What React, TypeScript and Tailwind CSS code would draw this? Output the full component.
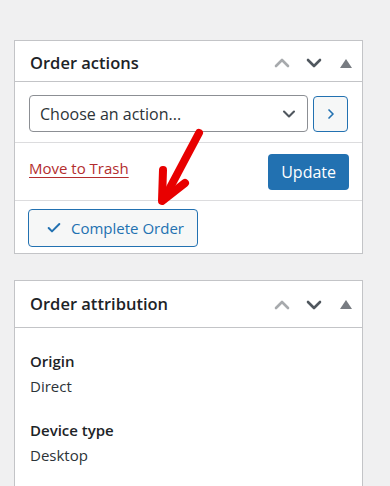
import { Check, ChevronDown, ChevronRight, ChevronUp } from "lucide-react";

function PanelHeader({ title, tall }: { title: string; tall?: boolean }) {
  return (
    <div
      className={
        tall
          ? "flex h-[47px] items-center border-b border-[#c3c4c7] pl-[15px] pt-[1px]"
          : "flex h-[41px] items-center border-b border-[#c3c4c7] pl-[15px] pt-[4px]"
      }
    >
      <h2 className="flex-1 text-[16.5px] font-semibold text-[#1d2327]">{title}</h2>
      <div className="flex items-center">
        <span className="flex w-[32px] justify-center text-[#a7aaad]">
          <ChevronUp className="h-[24px] w-[24px]" strokeWidth={2.6} />
        </span>
        <span className="flex w-[32px] justify-center text-[#50575e]">
          <ChevronDown className="h-[24px] w-[24px]" strokeWidth={2.6} />
        </span>
        <span className="flex w-[32px] justify-center">
          <svg width="12" height="9" viewBox="0 0 12 9">
            <polygon points="6,0 12,9 0,9" fill="#787c82" />
          </svg>
        </span>
      </div>
    </div>
  );
}

function Field({ label, value }: { label: string; value: string }) {
  return (
    <div className="flex flex-col gap-[2px]">
      <span className="text-[15px] font-semibold text-[#1d2327]">{label}</span>
      <span className="text-[15px] text-[#2c3338]">{value}</span>
    </div>
  );
}

export default function App() {
  return (
    <div
      className="relative h-[486px] overflow-hidden bg-[#f0f0f1] pl-[14px] pr-[27px] pt-[40px]"
      style={{ fontFamily: '"Open Sans", "Noto Sans", sans-serif' }}
    >
      <div className="border border-[#c3c4c7] bg-white">
        <PanelHeader title="Order actions" />
        <div className="flex items-center gap-[5px] border-b border-[#dcdcde] px-[14px] pb-[10px] pt-[13px]">
          <div className="flex h-[37px] flex-1 items-center justify-between rounded-[4px] border border-[#8c8f94] pl-[10px] pr-[8px]">
            <span className="text-[16px] text-[#2c3338]">Choose an action...</span>
            <ChevronDown className="h-[20px] w-[20px] text-[#50575e]" strokeWidth={2.5} />
          </div>
          <button className="flex h-[36px] w-[35px] items-center justify-center rounded-[4px] border border-[#2271b1] bg-[#f6f7f7] text-[#2271b1]">
            <ChevronRight className="h-[16px] w-[16px]" strokeWidth={2.5} />
          </button>
        </div>
        <div className="flex items-center justify-between border-b border-[#dcdcde] pb-[10px] pl-[14px] pr-[13px] pt-[11px]">
          <a className="mb-[7px] text-[15px] text-[#b32d2e] underline decoration-[1px] underline-offset-[3px]">
            Move to Trash
          </a>
          <button className="h-[36px] rounded-[4px] bg-[#2271b1] px-[13px] text-[16px] text-white">
            Update
          </button>
        </div>
        <div className="px-[13px] pb-[6px] pt-[8px]">
          <button className="flex h-[38px] items-center gap-[9px] rounded-[4px] border border-[#2271b1] bg-[#f6f7f7] pl-[17px] pr-[13px] text-[15px] text-[#2271b1]">
            <Check className="h-[16px] w-[16px]" strokeWidth={3} />
            Complete Order
          </button>
        </div>
      </div>

      <div className="mt-[26px] h-[300px] border border-[#c3c4c7] bg-white">
        <PanelHeader title="Order attribution" tall />
        <div className="flex flex-col gap-[22px] px-[15px] pt-[22px]">
          <Field label="Origin" value="Direct" />
          <Field label="Device type" value="Desktop" />
        </div>
      </div>

      <svg
        className="absolute left-[150px] top-[122px]"
        width="60"
        height="90"
        viewBox="150 122 60 90"
      >
        <g stroke="#e80000" strokeWidth="8" strokeLinecap="round" strokeLinejoin="round" fill="none">
          <line x1="199" y1="133" x2="164" y2="199" />
          <polyline points="163,170 162,201 185,183" />
        </g>
      </svg>
    </div>
  );
}
